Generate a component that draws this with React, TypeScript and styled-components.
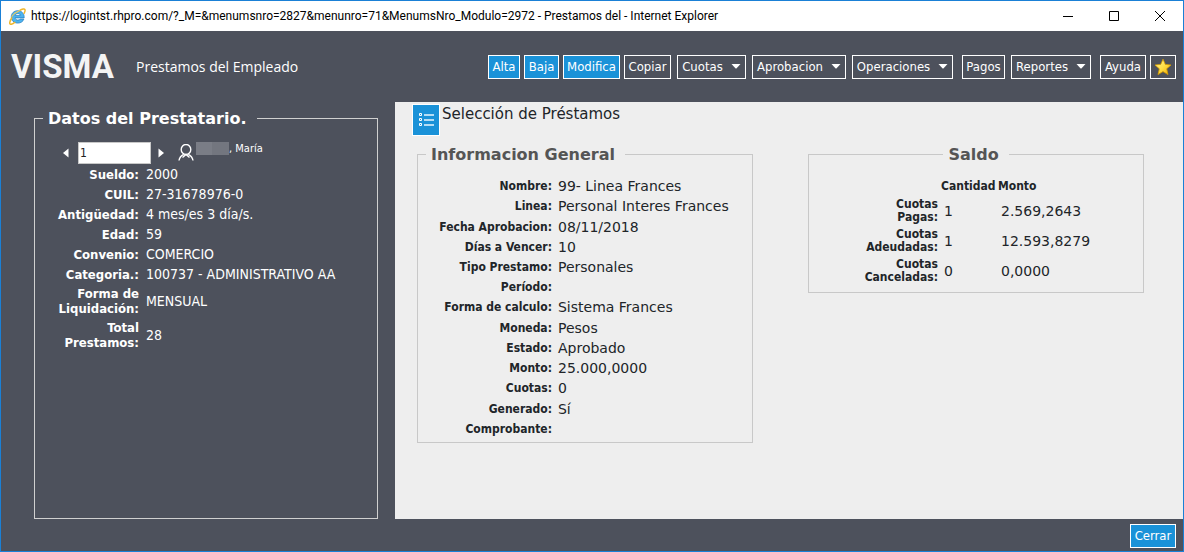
import React from 'react';
import styled, { createGlobalStyle } from 'styled-components';

const condensed = `'DejaVu Sans Condensed', 'DejaVu Sans', sans-serif`;
const wide = `'DejaVu Sans', sans-serif`;
const system = `'Open Sans', 'Noto Sans', sans-serif`;

const GlobalStyle = createGlobalStyle`
  *, *::before, *::after { box-sizing: border-box; }
  body { margin: 0; font-family: ${condensed}; font-size: 12px; }
  h1, fieldset, legend { margin: 0; padding: 0; }
`;

const Window = styled.div`
  display: flex;
  flex-direction: column;
  min-height: 100vh;
  border: 1px solid #1a80d6;
  background: #4d515c;
  color: #fff;
`;

const TitleBar = styled.header`
  display: flex;
  align-items: center;
  gap: 5px;
  height: 30px;
  padding-left: 8px;
  background: #fff;
  color: #000;
  font: 12px/16px Roboto, ${system};
`;

const TitleText = styled.span`
  flex: 1;
  white-space: nowrap;
  overflow: hidden;
`;

const CaptionButtons = styled.div`
  display: flex;
`;

const CaptionButton = styled.button`
  display: grid;
  place-items: center;
  width: 46px;
  height: 30px;
  padding: 0;
  border: 0;
  background: none;
  color: #000;
`;

const Masthead = styled.div`
  display: flex;
  align-items: center;
  height: 71px;
  padding: 0 7px 0 10px;
`;

const Brand = styled.div`
  width: 125px;
  font: bold 33px/40px Roboto, ${condensed};
  color: #f4f4f4;
`;

const PageTitle = styled.h1`
  flex: 1;
  font: 14px/20px ${system};
  white-space: nowrap;
`;

const Toolbar = styled.nav<{ $gap: number }>`
  display: flex;
  gap: ${(p) => p.$gap}px;
`;

const ToolButton = styled.button<{ $width: number; $primary?: boolean }>`
  display: flex;
  align-items: center;
  justify-content: center;
  gap: 8px;
  width: ${(p) => p.$width}px;
  height: 24px;
  padding: 0;
  border: 1px solid #fff;
  background: ${(p) => (p.$primary ? '#1a92d8' : 'transparent')};
  color: #fff;
  font: 13px/16px ${condensed};
  white-space: nowrap;
`;

const Content = styled.main`
  display: flex;
  flex: 1;
`;

const Sidebar = styled.aside`
  display: flex;
  width: 33.3333%;
  padding: 6px 17px 0 33px;
`;

const Detail = styled.section`
  flex: 1;
  padding: 2px 17px;
  background: #eee;
  color: #212529;
`;

const Panel = styled.fieldset<{ $dark?: boolean }>`
  flex: 1;
  min-width: 0;
  border: 1px solid ${(p) => (p.$dark ? '#d0d0d0' : '#c8c8c8')};
`;

const PanelTitle = styled.legend<{ $center?: boolean; $dark?: boolean }>`
  margin: ${(p) => (p.$center ? '0 auto' : '0 0 0 8px')};
  padding: 2px 10px 0 5px;
  font: bold 16px/18px ${wide};
  color: ${(p) => (p.$dark ? '#fff' : '#555')};
`;

const Picker = styled.div`
  display: flex;
  align-items: center;
  height: 22px;
  margin: 14px 0 0 28px;
`;

const StepButton = styled.button`
  display: grid;
  width: 6px;
  height: 10px;
  padding: 0;
  border: 0;
  background: none;
`;

const NumberInput = styled.input`
  width: 73px;
  height: 22px;
  margin: 0 7px 0 9px;
  padding: 0 1px;
  border: 1px solid #c8c8c8;
  background: #fff;
  color: #222;
  font: 12px/16px ${condensed};
`;

const Person = styled.span`
  display: flex;
  align-self: stretch;
  align-items: center;
  margin-left: 14px;
  font-size: 11px;
  line-height: 14px;
`;

const NameLine = styled.span`
  display: flex;
  align-self: flex-start;
  margin-left: 2px;
`;

const Redacted = styled.span`
  width: 33px;
  height: 13px;
  background: linear-gradient(90deg, #7a7d86 50%, #73767f 50%);
`;

const SideTable = styled.table`
  width: 100%;
  border-collapse: collapse;
  table-layout: fixed;
  font: 14px/15px ${condensed};

  th, td { height: 20px; padding: 2px 3px 2px 4px; }
  th { width: 107px; padding-left: 12px; text-align: right; font-size: 13px; }
`;

const DetailTable = styled.table`
  width: 100%;
  height: 263px;
  margin: 12px 0 3px;
  border-collapse: collapse;
  table-layout: fixed;
  font: 14px/16px ${wide};

  th, td { height: 20px; padding: 0 3px; }
  th { width: 137px; text-align: right; font: bold 12px/16px ${condensed}; }
`;

const BalanceTable = styled.table`
  width: 100%;
  margin: 12px 0 6px;
  border-collapse: collapse;
  table-layout: fixed;
  font: 14px/16px ${wide};

  th, td { height: 30px; padding: 0 3px; text-align: left; }
  th { font: bold 12px/13px ${condensed}; }
  thead th, thead td { height: 20px; padding: 0; }
  tbody th { padding-left: 50px; text-align: right; }
`;

const SelectionBar = styled.div`
  display: flex;
  gap: 2px;
  margin-bottom: 8px;
  font: 15px/20px ${wide};
`;

const SelectButton = styled.button`
  display: grid;
  place-items: center;
  width: 28px;
  height: 32px;
  padding: 0;
  border: 1px solid #fff;
  background: #1a92d8;
`;

const Panels = styled.div`
  display: flex;
  align-items: flex-start;
  gap: 55px;
  padding: 0 22px 0 5px;
`;

const Footer = styled.footer`
  display: flex;
  justify-content: flex-end;
  padding: 5px 7px 3px;
`;

const ieLogo = (
  <svg width="17" height="17" viewBox="0 0 17 17" aria-hidden="true">
    <path d="M15.200 9.900H6.100c.2 1.400 1.300 2.200 2.800 2.200 1 0 1.800-.3 2.300-1h3.700c-.9 2.500-3.100 4-6.100 4-3.900 0-6.500-2.500-6.500-6.200s2.700-6.200 6.500-6.200 6.600 2.700 6.400 7.200zM6.200 7.400h5.100c-.2-1.200-1.100-1.900-2.500-1.900s-2.400.7-2.600 1.900z" fill="#4db3ee" stroke="#2079bd" strokeWidth=".7" />
    <path d="M3 9.500C.8 13-.1 15.900 1.600 16.300c1.200.2 2.900-.8 4.600-2.300M10.500 2.700C13.300.9 15.500.4 16 1.700c.3 1-.2 2.500-1.200 4.200" fill="none" stroke="#efb72d" strokeWidth="1.500" />
    <path d="M2.600 8.800C4.600 5.900 7.500 3.800 10.800 2.500" fill="none" stroke="#f3ca58" strokeWidth="1.100" />
  </svg>
);

const caret = (
  <svg width="10" height="5" viewBox="0 0 10 5" aria-hidden="true">
    <path d="M0.500 0h9L5.600 4.300q-.6.500-1.200 0z" fill="#fff" />
  </svg>
);

const star = (
  <svg width="18" height="18" viewBox="0 0 18 18" aria-hidden="true">
    <defs>
      <linearGradient id="gold" x1="0" y1="0" x2="1" y2="1">
        <stop offset="0" stopColor="#fff6a0" />
        <stop offset=".5" stopColor="#ffdf45" />
        <stop offset="1" stopColor="#f2a900" />
      </linearGradient>
    </defs>
    <path d="M9 1.200l2.300 5.200 5.700.6-4.300 3.800 1.300 5.800L9 13.600l-5 3 1.300-5.800L1 7l5.700-.6z" fill="url(#gold)" stroke="#d59a00" strokeWidth=".8" strokeLinejoin="round" />
  </svg>
);

const person = (
  <svg width="16" height="18" viewBox="0 0 16 18" fill="none" stroke="#fff" strokeWidth="1.400" aria-hidden="true">
    <ellipse cx="8" cy="5.500" rx="4.800" ry="5" />
    <path d="M1 16.500c.4-3 2-4.800 4.700-6.200M15 16.500c-.4-3-2-4.800-4.700-6.200M4.500 13.500L8 10.500l3.500 3" />
  </svg>
);

const list = (
  <svg width="16" height="16" viewBox="0 0 16 16" fill="none" aria-hidden="true">
    <path d="M1.500 1.500h2v2h-2zM1.500 6.500h2v2h-2zM1.500 11.500h2v2h-2z" stroke="#fff" />
    <path d="M6 3h10M6 8h10M6 13h10" stroke="#b5ddf4" strokeWidth="2" />
  </svg>
);

const MenuButton = ({ children, width }: { children: string; width: number }) => (
  <ToolButton $width={width} aria-haspopup="menu">
    {children}
    {caret}
  </ToolButton>
);

const employee = [
  ['Sueldo:', '2000'],
  ['CUIL:', '27-31678976-0'],
  ['Antigüedad:', '4 mes/es 3 día/s.'],
  ['Edad:', '59'],
  ['Convenio:', 'COMERCIO'],
  ['Categoria.:', '100737 - ADMINISTRATIVO AA'],
  ['Forma de Liquidación:', 'MENSUAL'],
  ['Total Prestamos:', '28'],
];

const loan = [
  ['Nombre:', '99- Linea Frances'],
  ['Linea:', 'Personal Interes Frances'],
  ['Fecha Aprobacion:', '08/11/2018'],
  ['Días a Vencer:', '10'],
  ['Tipo Prestamo:', 'Personales'],
  ['Período:', ''],
  ['Forma de calculo:', 'Sistema Frances'],
  ['Moneda:', 'Pesos'],
  ['Estado:', 'Aprobado'],
  ['Monto:', '25.000,0000'],
  ['Cuotas:', '0'],
  ['Generado:', 'Sí'],
  ['Comprobante:', ''],
];

const balance = [
  ['Cuotas Pagas:', '1', '2.569,2643'],
  ['Cuotas Adeudadas:', '1', '12.593,8279'],
  ['Cuotas Canceladas:', '0', '0,0000'],
];

const Rows = ({ data }: { data: string[][] }) => (
  <tbody>
    {data.map(([label, ...values]) => (
      <tr key={label}>
        <th scope="row">{label}</th>
        {values.map((value, i) => (
          <td key={i}>{value}</td>
        ))}
      </tr>
    ))}
  </tbody>
);

export default function App() {
  return (
    <Window>
      <GlobalStyle />
      <TitleBar>
        {ieLogo}
        <TitleText>
          https://logintst.rhpro.com/?_M=&amp;menumsnro=2827&amp;menunro=71&amp;MenumsNro_Modulo=2972 - Prestamos del - Internet Explorer
        </TitleText>
        <CaptionButtons>
          <CaptionButton aria-label="Minimizar">
            <svg width="10" height="10" stroke="currentColor"><path d="M0 5.500h10" /></svg>
          </CaptionButton>
          <CaptionButton aria-label="Maximizar">
            <svg width="10" height="10" fill="none" stroke="currentColor"><path d="M.5.500h9v9h-9z" /></svg>
          </CaptionButton>
          <CaptionButton aria-label="Cerrar ventana">
            <svg width="10" height="10" stroke="currentColor"><path d="M0 0l10 10M10 0L0 10" /></svg>
          </CaptionButton>
        </CaptionButtons>
      </TitleBar>

      <Masthead>
        <Brand>VISMA</Brand>
        <PageTitle>Prestamos del Empleado</PageTitle>
        <Toolbar $gap={9}>
          <Toolbar as="div" $gap={6}>
            <Toolbar as="div" $gap={4}>
              <ToolButton $primary $width={32}>Alta</ToolButton>
              <ToolButton $primary $width={35}>Baja</ToolButton>
              <ToolButton $primary $width={57}>Modifica</ToolButton>
              <ToolButton $width={47}>Copiar</ToolButton>
            </Toolbar>
            <MenuButton width={69}>Cuotas</MenuButton>
            <MenuButton width={94}>Aprobacion</MenuButton>
            <MenuButton width={101}>Operaciones</MenuButton>
          </Toolbar>
          <Toolbar as="div" $gap={6}>
            <ToolButton $width={43}>Pagos</ToolButton>
            <MenuButton width={80}>Reportes</MenuButton>
          </Toolbar>
          <Toolbar as="div" $gap={4}>
            <ToolButton $width={46}>Ayuda</ToolButton>
            <ToolButton $width={26} aria-label="Favoritos">{star}</ToolButton>
          </Toolbar>
        </Toolbar>
      </Masthead>

      <Content>
        <Sidebar>
          <Panel $dark>
            <PanelTitle $dark>Datos del Prestatario.</PanelTitle>
            <Picker>
              <StepButton aria-label="Anterior">
                <svg width="6" height="10"><path d="M5.500.500v9L0 5z" fill="#fff" /></svg>
              </StepButton>
              <NumberInput aria-label="Empleado" defaultValue="1" />
              <StepButton aria-label="Siguiente">
                <svg width="6" height="10"><path d="M.5.500v9L6 5z" fill="#fff" /></svg>
              </StepButton>
              <Person>
                {person}
                <NameLine>
                  <Redacted />, María
                </NameLine>
              </Person>
            </Picker>
            <SideTable>
              <Rows data={employee} />
            </SideTable>
          </Panel>
        </Sidebar>

        <Detail>
          <SelectionBar>
            <SelectButton aria-label="Seleccionar préstamo">{list}</SelectButton>
            <span>Selección de Préstamos</span>
          </SelectionBar>
          <Panels>
            <Panel>
              <PanelTitle>Informacion General</PanelTitle>
              <DetailTable>
                <Rows data={loan} />
              </DetailTable>
            </Panel>
            <Panel>
              <PanelTitle $center>Saldo</PanelTitle>
              <BalanceTable>
                <colgroup>
                  <col width="132" />
                  <col width="57" />
                  <col />
                </colgroup>
                <thead>
                  <tr>
                    <td />
                    <th scope="col">Cantidad</th>
                    <th scope="col">Monto</th>
                  </tr>
                </thead>
                <Rows data={balance} />
              </BalanceTable>
            </Panel>
          </Panels>
        </Detail>
      </Content>

      <Footer>
        <ToolButton $primary $width={46}>Cerrar</ToolButton>
      </Footer>
    </Window>
  );
}
